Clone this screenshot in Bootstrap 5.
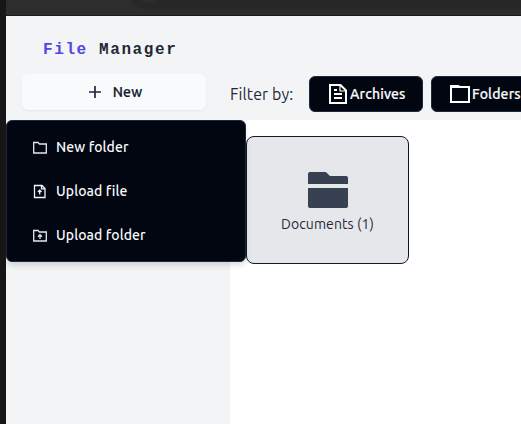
<!DOCTYPE html>
<html lang="en">
<head>
<meta charset="utf-8">
<meta name="viewport" content="width=device-width, initial-scale=1">
<title>File Manager</title>
<link href="https://cdn.jsdelivr.net/npm/bootstrap@5.3.0/dist/css/bootstrap.min.css" rel="stylesheet">
<style>
body{font-family:Ubuntu,"Noto Sans",sans-serif;font-size:14px;line-height:20px;color:#1f2937;background:#fff}
.desk-edge{width:6px;background:#161616}
.window-top{height:16px;background:#2d2d2d;border-bottom:1px solid #1d191a}
.address{width:500px;height:36px;margin:-27px 0 0 122px;border-radius:18px;background:#272727;padding:7px 9px}
.address span{display:block;width:24px;height:24px;border-radius:50%;background:#2d2d2d;margin-top:-1px}
.side{width:224px;background:#f3f4f6;padding:0 24px 0 16px}
.brand{font:700 16px/24px "Liberation Mono",monospace;letter-spacing:1.6px;margin:22px 0 12px 21px}
.brand b{color:#4f46e5}
.btn-new{height:36px;width:184px;background:#f9fafb;border-radius:6px;box-shadow:0 1px 2px rgba(0,0,0,.05);color:#0f172a;padding:0 0 0 1px}
.btn-new:hover{background:#fff}
.btn-new span{margin-left:10px}
.tools{height:104px;background:#f3f4f6;padding-top:60px}
.tools label{font-size:16px;line-height:24px;width:79px;padding-top:2px;letter-spacing:.1px}
.btn-ink{height:36px;background:#020611;border:1px solid #1e293b;border-radius:6px;color:#f8fafc;padding:0 0 0 17px}
.btn-ink:hover{background:#1e293b;color:#fff}
.archives{width:114px}.folders{width:106px}
.btn{font-size:14px;line-height:20px;font-weight:500;letter-spacing:.15px;-webkit-text-stroke:.2px currentColor}
.tile{width:163px;height:128px;background:#e5e7eb;border:1px solid #0f172a;border-radius:8px;padding-top:29px}
.menu-pop{left:0;top:104px;width:240px;height:142px;background:#020611;border:1px solid #1e293b;border-radius:6px;box-shadow:0 4px 6px -1px rgba(0,0,0,.15);padding:4px 0 0;z-index:5}
.menu-pop a{height:44px;padding-left:26px;gap:8px;color:#f8fafc;font-weight:500;letter-spacing:.1px}
.caption{margin-top:2px;letter-spacing:.1px}
</style>
<script src="https://cdn.jsdelivr.net/npm/bootstrap@5.3.0/dist/js/bootstrap.bundle.min.js"></script>
</head>
<body class="d-flex vh-100 overflow-hidden">
<div class="desk-edge flex-shrink-0"></div>
<div class="d-flex flex-column flex-grow-1 overflow-hidden">
  <div class="window-top flex-shrink-0 overflow-hidden d-flex"><div class="address flex-shrink-0"><span></span></div></div>
  <div class="d-flex flex-grow-1 position-relative">
    <aside class="side flex-shrink-0">
      <h1 class="brand text-nowrap"><b>File</b> Manager</h1>
      <button class="btn btn-new border-0 d-flex align-items-center justify-content-center">
        <svg width="16" height="16" viewBox="0 0 16 16" fill="none" stroke="#1e293b" stroke-width="1.7"><path d="M8 2v12M2 8h12"/></svg>
        <span>New</span>
      </button>
    </aside>
    <main class="flex-grow-1">
      <div class="tools d-flex flex-nowrap">
        <label class="text-nowrap flex-shrink-0 mt-1">Filter by:</label>
        <button class="btn btn-ink archives d-flex align-items-center flex-shrink-0 me-2">
          <svg width="23" height="22" viewBox="0 0 23 22" fill="none" stroke="#fff" stroke-width="2"><path d="M3 2h10.500L19 7.500V20H3z"/><path d="M13 2v6h6" stroke-width="1.200"/><path d="M7 7h3M7 11h8M7 15h8"/></svg>
          <span>Archives</span>
        </button>
        <button class="btn btn-ink folders d-flex align-items-center flex-shrink-0">
          <svg width="23" height="22" viewBox="0 0 23 22" fill="none" stroke="#fff" stroke-width="2"><path d="M2 4h18v15H2z"/><path d="M1 3h8l2 1"/></svg>
          <span>Folders</span>
        </button>
      </div>
      <div class="p-3">
        <div class="tile d-flex flex-column align-items-center">
          <svg class="mt-1" width="42" height="42" viewBox="0 0 42 42" fill="#374151"><path d="M1 14V4q0-2 2-2h15q1 0 2 1l3 3h16q2 0 2 2v6zM1 18h40v18q0 2-2 2H3q-2 0-2-2z"/></svg>
          <span class="caption">Documents (1)</span>
        </div>
      </div>
    </main>
    <nav class="menu-pop position-absolute">
      <a href="#" class="d-flex align-items-center text-decoration-none"><svg width="15" height="15" viewBox="0 0 15 15" fill="none" stroke="#e5e7eb" stroke-width="1.300"><path d="M.7 2.500h4.300l1.500 1.500h6.800v9H.7z"/></svg><span>New folder</span></a>
      <a href="#" class="d-flex align-items-center text-decoration-none"><svg width="15" height="15" viewBox="0 0 15 15" fill="none" stroke="#f1f5f9" stroke-width="1.300"><path d="M1.500 1.500h7.500l3 3v9H1.500zM8.500 1.500v3.300H12M6.700 10.500v-4M4.900 8l1.800-1.800L8.500 8"/></svg><span>Upload file</span></a>
      <a href="#" class="d-flex align-items-center text-decoration-none"><svg width="15" height="15" viewBox="0 0 15 15" fill="none" stroke="#e5e7eb" stroke-width="1.300"><path d="M.7 2.500h4.300l1.500 1.500h6.800v9H.7zM7 11V7M5 8.700l2-2 2 2"/></svg><span>Upload folder</span></a>
    </nav>
  </div>
</div>
</body>
</html>
